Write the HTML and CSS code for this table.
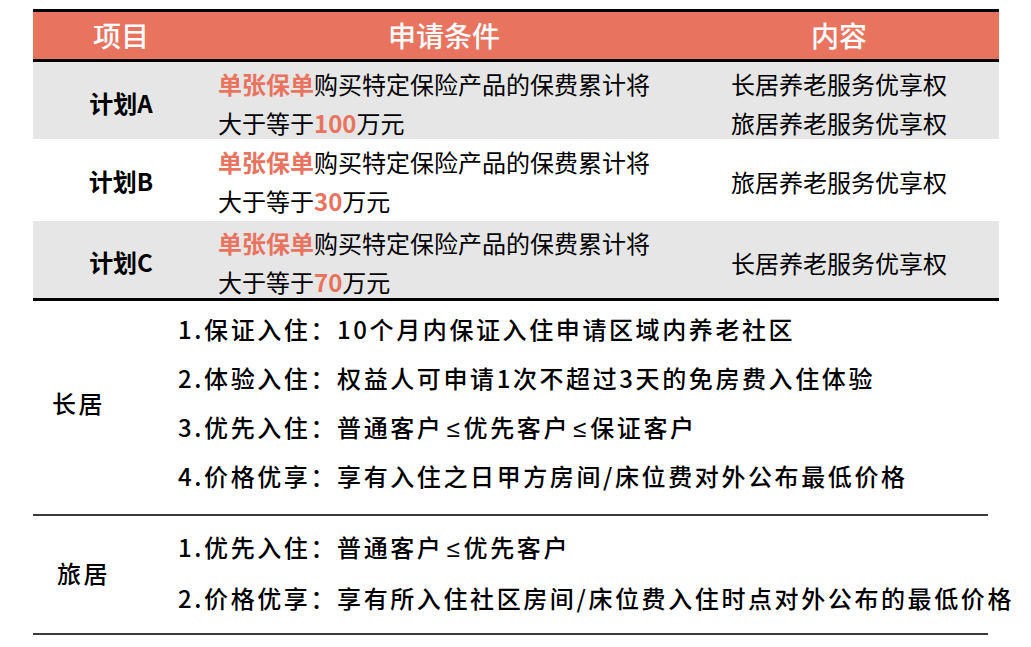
FILE: index.html
```html
<!DOCTYPE html>
<html lang="zh-CN">
<head>
<meta charset="utf-8">
<title>计划权益</title>
<link rel="stylesheet" href="styles.css">
</head>
<body>
<div class="page">
  <div class="plan-table">
    <div class="row head">
      <div class="cell c-item">项目</div>
      <div class="cell c-cond">申请条件</div>
      <div class="cell c-content">内容</div>
    </div>
    <div class="row shade row-a">
      <div class="cell c-item plan">计划A</div>
      <div class="cell c-cond"><span class="hl">单张保单</span>购买特定保险产品的保费累计将<br>大于等于<span class="hl">100</span>万元</div>
      <div class="cell c-content">长居养老服务优享权<br>旅居养老服务优享权</div>
    </div>
    <div class="row row-b">
      <div class="cell c-item plan">计划B</div>
      <div class="cell c-cond"><span class="hl">单张保单</span>购买特定保险产品的保费累计将<br>大于等于<span class="hl">30</span>万元</div>
      <div class="cell c-content">旅居养老服务优享权</div>
    </div>
    <div class="row shade row-c">
      <div class="cell c-item plan">计划C</div>
      <div class="cell c-cond"><span class="hl">单张保单</span>购买特定保险产品的保费累计将<br>大于等于<span class="hl">70</span>万元</div>
      <div class="cell c-content">长居养老服务优享权</div>
    </div>
  </div>

  <div class="benefit long">
    <div class="label">长居</div>
    <ul class="items">
      <li>1.保证入住：10个月内保证入住申请区域内养老社区</li>
      <li>2.体验入住：权益人可申请1次不超过3天的免房费入住体验</li>
      <li>3.优先入住：普通客户<span class="le">≤</span>优先客户<span class="le">≤</span>保证客户</li>
      <li>4.价格优享：享有入住之日甲方房间/床位费对外公布最低价格</li>
    </ul>
  </div>

  <div class="benefit travel">
    <div class="label">旅居</div>
    <ul class="items">
      <li>1.优先入住：普通客户<span class="le">≤</span>优先客户</li>
      <li>2.价格优享：享有所入住社区房间/床位费入住时点对外公布的最低价格</li>
    </ul>
  </div>
</div>
</body>
</html>
```

FILE: styles.css
```css
html, body {
  margin: 0;
  padding: 0;
  background: #ffffff;
}

body {
  font-family: "Noto Sans CJK SC", "Noto Sans", sans-serif;
  color: #000000;
}

.page {
  padding: 9px 0 0 33px;
  width: 966px;
}

.plan-table {
  width: 966px;
  border-top: 3px solid #000000;
  border-bottom: 3px solid #000000;
}

.row {
  display: grid;
  grid-template-columns: 176px 470px 1fr;
  align-items: center;
}

.row.head {
  background: #e8735f;
  height: 47px;
  border-bottom: 3px solid #000000;
  color: #ffffff;
}

.row.head .cell {
  font-size: 28px;
  font-weight: 500;
  line-height: 47px;
  text-align: center;
  padding: 0;
}

.row.shade {
  background: #e6e6e6;
}

.row-a { height: 77px; }
.row-b { height: 82px; }
.row-c { height: 77px; }

.cell {
  font-size: 24px;
  line-height: 39px;
  white-space: nowrap;
}

.c-item {
  text-align: center;
}

.plan {
  font-weight: 700;
}

.c-cond {
  padding-left: 9px;
  padding-top: 2px;
}

.c-content {
  text-align: center;
  padding-top: 2px;
}

.hl {
  color: #e8735f;
  font-weight: 700;
}

.benefit {
  display: flex;
  align-items: center;
  width: 955px;
  border-bottom: 2px solid #3a3a3a;
  font-size: 24px;
  font-weight: 500;
  letter-spacing: 2.6px;
  white-space: nowrap;
}

.benefit.long {
  padding: 3px 0 14px 0;
}

.benefit.long .items {
  line-height: 49px;
}

.benefit.travel {
  padding: 5px 0 10px 0;
}

.benefit.travel .items {
  line-height: 51px;
}

.label {
  flex: none;
  width: 145px;
  padding-left: 19px;
  box-sizing: border-box;
}

.travel .label {
  padding-left: 24px;
}

.items {
  flex: none;
  list-style: none;
  margin: 0;
  padding: 0;
}

.le {
  font-family: "Liberation Sans", "DejaVu Sans", sans-serif;
  font-weight: 400;
  line-height: 0;
  letter-spacing: 0;
  padding: 0 4px 0 3px;
}
```
